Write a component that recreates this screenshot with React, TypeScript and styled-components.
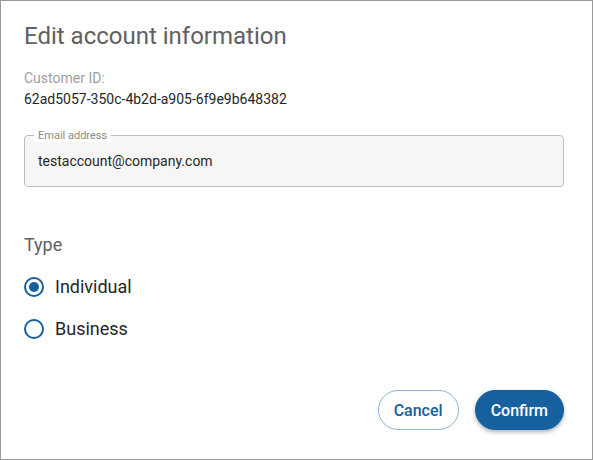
import React, { useState } from "react";
import styled, { createGlobalStyle } from "styled-components";

const Global = createGlobalStyle`
  html, body { margin: 0; padding: 0; background: #fff; }
  body { font-family: Roboto, "Noto Sans", sans-serif; }
  * { box-sizing: border-box; }
`;

const Dialog = styled.div`
  width: 593px;
  height: 460px;
  border: 1px solid #9a9a9a;
  background: #fff;
  padding: 19px 28px 0 23px;
  display: flex;
  flex-direction: column;
`;

const Title = styled.h1`
  margin: 0;
  font-size: 24px;
  font-weight: 400;
  color: #616161;
  line-height: 32px;
`;

const IdBlock = styled.div`
  margin-top: 16px;
  display: flex;
  flex-direction: column;
  gap: 1px;
`;

const IdLabel = styled.div`
  font-size: 14px;
  color: #9e9e9e;
  line-height: 20px;
`;

const IdValue = styled.div`
  font-size: 14px;
  color: #262626;
  line-height: 20px;
`;

const Field = styled.div`
  margin-top: 26px;
  padding: 0 13px;
  height: 52px;
  border: 1px solid #bdbdbd;
  border-radius: 4px;
  background: #f6f6f6;
  display: flex;
  align-items: center;
  position: relative;
`;

const FloatLabel = styled.span`
  position: absolute;
  left: 9px;
  top: -7px;
  font-size: 11px;
  color: #8a8a8a;
  padding: 0 4px;
  line-height: 13px;
  background: #fff;
`;

const Input = styled.input`
  border: none;
  background: transparent;
  outline: none;
  font-family: inherit;
  font-size: 14px;
  color: #262626;
  width: 100%;
  padding: 0;
  margin-top: -1px;
`;

const Section = styled.div`
  margin-top: 46px;
  display: flex;
  flex-direction: column;
`;

const SectionTitle = styled.div`
  font-size: 18px;
  color: #616161;
  line-height: 24px;
`;

const Options = styled.div`
  margin-top: 18px;
  display: flex;
  flex-direction: column;
  gap: 18px;
`;

const Option = styled.label`
  display: flex;
  align-items: center;
  gap: 11px;
  font-size: 18px;
  color: #262626;
  line-height: 24px;
  cursor: pointer;
`;

const Circle = styled.span<{ $checked: boolean }>`
  width: 20px;
  height: 20px;
  border-radius: 50%;
  border: 2px solid #16609e;
  display: flex;
  align-items: center;
  justify-content: center;
  flex-shrink: 0;
  &::after {
    content: "";
    width: 10px;
    height: 10px;
    border-radius: 50%;
    background: #16609e;
    display: ${(p) => (p.$checked ? "block" : "none")};
  }
`;

const Actions = styled.div`
  margin-top: auto;
  margin-bottom: 29px;
  display: flex;
  justify-content: flex-end;
  gap: 16px;
`;

const Button = styled.button<{ $primary?: boolean }>`
  height: 40px;
  border-radius: 20px;
  font-family: inherit;
  font-size: 16px;
  font-weight: 500;
  padding: 0 15px;
  cursor: pointer;
  border: 1px solid ${(p) => (p.$primary ? "#16609e" : "#8db4d6")};
  background: ${(p) => (p.$primary ? "#16609e" : "#fff")};
  color: ${(p) => (p.$primary ? "#fff" : "#16609e")};
  box-shadow: ${(p) => (p.$primary ? "0 2px 4px rgba(0,0,0,0.3)" : "none")};
`;

export default function App() {
  const [type, setType] = useState("individual");
  return (
    <>
      <Global />
      <Dialog>
        <Title>Edit account information</Title>
        <IdBlock>
          <IdLabel>Customer ID:</IdLabel>
          <IdValue>62ad5057-350c-4b2d-a905-6f9e9b648382</IdValue>
        </IdBlock>
        <Field>
          <FloatLabel>Email address</FloatLabel>
          <Input defaultValue="testaccount@company.com" />
        </Field>
        <Section>
          <SectionTitle>Type</SectionTitle>
          <Options>
            <Option onClick={() => setType("individual")}>
              <Circle $checked={type === "individual"} />
              Individual
            </Option>
            <Option onClick={() => setType("business")}>
              <Circle $checked={type === "business"} />
              Business
            </Option>
          </Options>
        </Section>
        <Actions>
          <Button>Cancel</Button>
          <Button $primary>Confirm</Button>
        </Actions>
      </Dialog>
    </>
  );
}
